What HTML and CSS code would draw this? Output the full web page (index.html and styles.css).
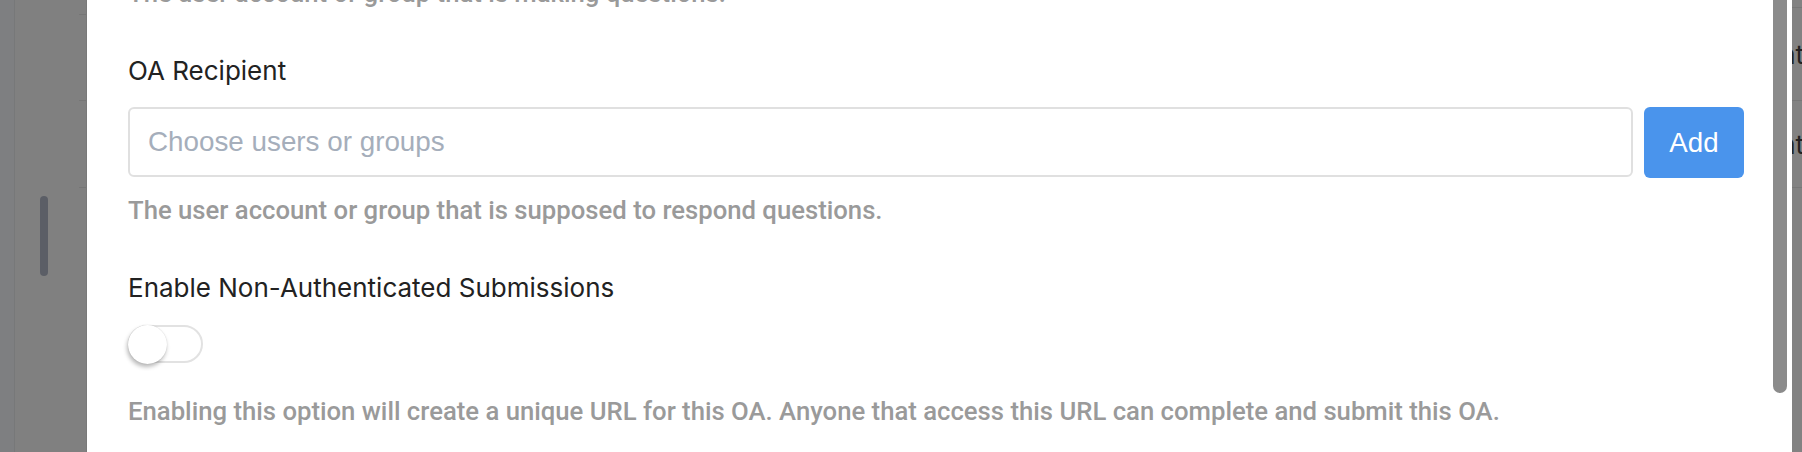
FILE: index.html
```html
<!DOCTYPE html>
<html>
<head>
<meta charset="utf-8">
<link rel="stylesheet" href="styles.css">
</head>
<body>
<div class="screen">
  <div class="bg-left">
    <div class="bg-strip"></div>
    <div class="bg-rows">
      <div class="bg-row r1"></div>
      <div class="bg-row r2"></div>
      <div class="bg-row r3"></div>
      <div class="bg-thumb"></div>
    </div>
  </div>
  <div class="modal">
    <div class="modal-body">
      <p class="help cut">The user account or group that is making questions.</p>
      <div class="field">
        <label class="label">OA Recipient</label>
        <div class="picker">
          <div class="input"><span class="placeholder">Choose users or groups</span></div>
          <button class="btn">Add</button>
        </div>
        <p class="help">The user account or group that is supposed to respond questions.</p>
      </div>
      <div class="field">
        <label class="label">Enable Non-Authenticated Submissions</label>
        <div class="toggle"><span class="knob"></span></div>
        <p class="help">Enabling this option will create a unique URL for this OA. Anyone that access this URL can complete and submit this OA.</p>
      </div>
    </div>
    <div class="modal-scroll"><div class="modal-thumb"></div></div>
  </div>
  <div class="bg-right">
    <div class="bg-cell c1"><span>nt</span></div>
    <div class="bg-cell c2"><span>nt</span></div>
  </div>
</div>
</body>
</html>
```
FILE: styles.css
```css
html, body {
  margin: 0;
  padding: 0;
  background: #808080;
  overflow: hidden;
}
.screen {
  display: flex;
  width: 1802px;
  height: 452px;
  overflow: hidden;
}
.bg-left {
  width: 87px;
  flex: none;
  display: flex;
  background: #808080;
}
.bg-strip {
  width: 14px;
  background: #7e7f81;
  border-right: 1px solid #777879;
}
.bg-rows {
  flex: 1;
  position: relative;
  display: flex;
  flex-direction: column;
  align-items: flex-end;
  border-right: 1px solid #797979;
}
.bg-row {
  width: 7px;
  border-bottom: 1px solid #767676;
}
.bg-row.r1 { height: 14px; }
.bg-row.r2 { height: 85px; }
.bg-row.r3 { height: 86px; }
.bg-thumb {
  position: absolute;
  left: 25px;
  top: 196px;
  width: 8px;
  height: 80px;
  border-radius: 4px;
  background: #5b5e66;
}
.modal {
  width: 1705px;
  flex: none;
  background: #fff;
  display: flex;
}
.modal-body {
  flex: 1;
  padding: 0 29px 0 41px;
  font-family: "Inter", "Liberation Sans", sans-serif;
}
.help {
  margin: 0;
  font-family: "Roboto", "Liberation Sans", sans-serif;
  font-size: 25.7px;
  font-weight: 500;
  line-height: 30px;
  color: #9a9a9a;
  white-space: nowrap;
}
.help.cut {
  margin-top: -22px;
}
.field {
  margin-top: 47px;
}
.label {
  display: block;
  font-size: 26px;
  line-height: 32px;
  color: #222;
}
.picker {
  display: flex;
  gap: 11px;
  margin-top: 20px;
}
.input {
  flex: 1;
  height: 70px;
  box-sizing: border-box;
  border: 2px solid #e0e0e0;
  border-radius: 6px;
  display: flex;
  align-items: center;
  padding-left: 18px;
}
.placeholder {
  font-family: "Liberation Sans", Arial, sans-serif;
  font-size: 27.8px;
  color: #a5aebb;
}
.btn {
  width: 100px;
  height: 71px;
  border: none;
  border-radius: 6px;
  background: #4a94ec;
  color: #fff;
  font-family: "Liberation Sans", Arial, sans-serif;
  font-size: 27.7px;
  padding: 0;
}
.picker + .help {
  margin-top: 17px;
}
.toggle {
  margin-top: 21px;
  width: 75px;
  height: 38px;
  box-sizing: border-box;
  border: 2px solid #e2e2e2;
  border-radius: 19px;
  display: flex;
  align-items: center;
  background: #fff;
}
.knob {
  width: 39px;
  height: 39px;
  margin-left: -2px;
  border-radius: 50%;
  background: #fff;
  box-shadow: -1px 3px 4px rgba(0,0,0,0.28), 0 0 1px rgba(0,0,0,0.2);
}
.toggle + .help {
  margin-top: 33px;
}
.modal-scroll {
  width: 19px;
  flex: none;
}
.modal-thumb {
  width: 14px;
  height: 393px;
  border-radius: 0 0 7px 7px;
  background: #8b8b8b;
}
.bg-right {
  flex: 1;
  display: flex;
  flex-direction: column;
  background: #828282;
  overflow: hidden;
}
.bg-cell {
  border-top: 1px solid #777;
  display: flex;
  align-items: center;
  justify-content: flex-end;
  font-family: "Inter", "Liberation Sans", sans-serif;
  font-size: 26px;
  color: #222;
  white-space: nowrap;
}
.bg-cell span {
  margin-right: -2px;
}
.bg-cell.c1 { margin-top: 7px; height: 92px; }
.bg-cell.c2 { height: 86px; border-bottom: 1px solid #777; }
```
